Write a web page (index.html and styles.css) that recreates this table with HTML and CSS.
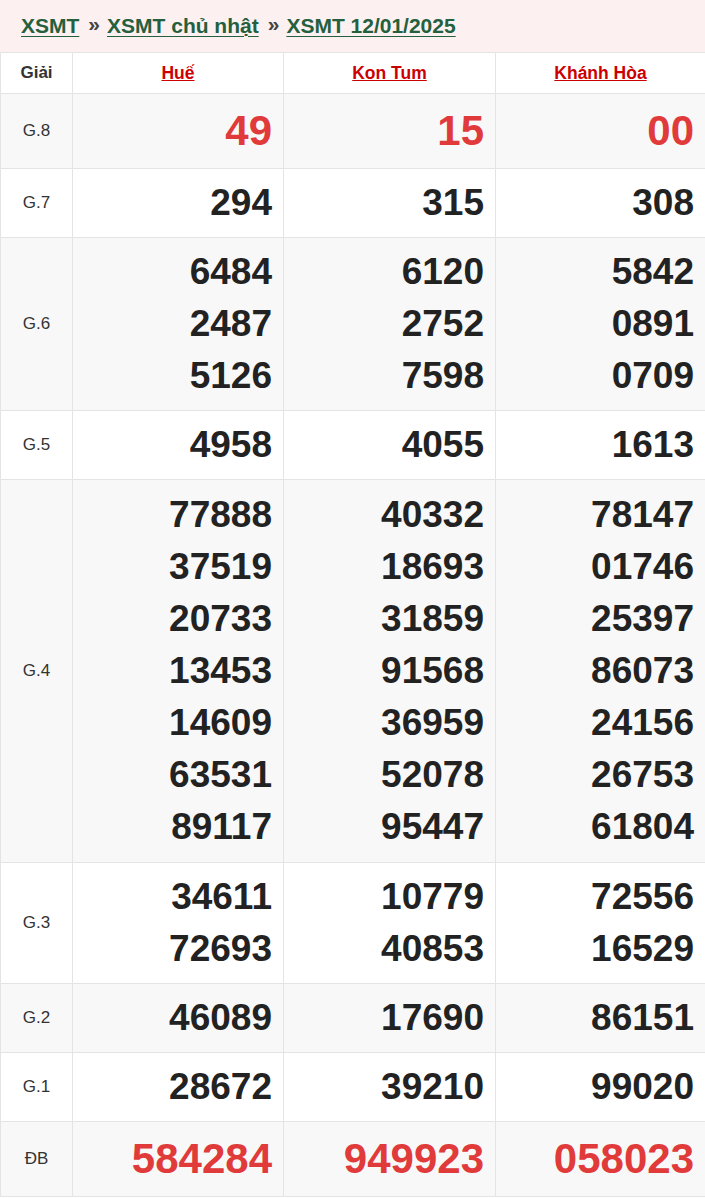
FILE: index.html
```html
<!DOCTYPE html>
<html lang="vi">
<head>
<meta charset="utf-8">
<link rel="stylesheet" href="styles.css">
</head>
<body>
<div class="crumbs">
  <a href="#">XSMT</a><span class="sep">»</span><a href="#">XSMT chủ nhật</a><span class="sep">»</span><a href="#">XSMT 12/01/2025</a>
</div>
<table class="kq">
  <colgroup><col class="c-label"><col class="c-a"><col class="c-b"><col class="c-c"></colgroup>
  <thead>
    <tr><th class="lbl">Giải</th><th><a href="#">Huế</a></th><th><a href="#">Kon Tum</a></th><th><a href="#">Khánh Hòa</a></th></tr>
  </thead>
  <tbody>
    <tr class="alt big"><td class="lbl">G.8</td><td class="red"><div>49</div></td><td class="red"><div>15</div></td><td class="red"><div>00</div></td></tr>
    <tr><td class="lbl">G.7</td><td><div>294</div></td><td><div>315</div></td><td><div>308</div></td></tr>
    <tr class="alt"><td class="lbl">G.6</td><td><div>6484</div><div>2487</div><div>5126</div></td><td><div>6120</div><div>2752</div><div>7598</div></td><td><div>5842</div><div>0891</div><div>0709</div></td></tr>
    <tr><td class="lbl">G.5</td><td><div>4958</div></td><td><div>4055</div></td><td><div>1613</div></td></tr>
    <tr class="alt g4"><td class="lbl">G.4</td>
      <td><div>77888</div><div>37519</div><div>20733</div><div>13453</div><div>14609</div><div>63531</div><div>89117</div></td>
      <td><div>40332</div><div>18693</div><div>31859</div><div>91568</div><div>36959</div><div>52078</div><div>95447</div></td>
      <td><div>78147</div><div>01746</div><div>25397</div><div>86073</div><div>24156</div><div>26753</div><div>61804</div></td></tr>
    <tr><td class="lbl">G.3</td><td><div>34611</div><div>72693</div></td><td><div>10779</div><div>40853</div></td><td><div>72556</div><div>16529</div></td></tr>
    <tr class="alt"><td class="lbl">G.2</td><td><div>46089</div></td><td><div>17690</div></td><td><div>86151</div></td></tr>
    <tr><td class="lbl">G.1</td><td><div>28672</div></td><td><div>39210</div></td><td><div>99020</div></td></tr>
    <tr class="alt big"><td class="lbl">ĐB</td><td class="red"><div>584284</div></td><td class="red"><div>949923</div></td><td class="red"><div>058023</div></td></tr>
  </tbody>
</table>
</body>
</html>
```
FILE: styles.css
```css
html, body {
  margin: 0;
  padding: 0;
  background: #fff;
  font-family: "Liberation Sans", Arial, sans-serif;
  color: #222;
}
.crumbs {
  background: #fdf0f0;
  height: 52px;
  box-sizing: border-box;
  padding: 0 21px;
  display: flex;
  align-items: center;
  font-size: 21px;
  font-weight: bold;
}
.crumbs a {
  color: #24603d;
  text-decoration: underline;
  text-underline-offset: 3px;
  text-decoration-thickness: 1px;
}
.crumbs .sep {
  color: #444;
  padding: 0 7px 0 9px;
  position: relative;
  top: -2px;
}
.kq {
  width: 705px;
  border-collapse: collapse;
  table-layout: fixed;
}
.c-label { width: 72px; }
.c-a { width: 211px; }
.c-b { width: 212px; }
.c-c { width: 210px; }
.kq th, .kq td {
  border: 1px solid #e4e4e4;
}
.kq th {
  height: 40px;
  padding: 0;
  font-size: 17.5px;
  font-weight: bold;
  text-align: center;
}
.kq th a {
  color: #cc0000;
  text-decoration: underline;
}
.kq th.lbl { color: #333; font-size: 17px; }
.kq td {
  padding: 8px 11px 8px 0;
  text-align: right;
  vertical-align: middle;
  font-size: 37px;
  font-weight: bold;
  line-height: 52px;
  color: #222;
}
.kq tr.g4 td { padding-top: 9px; padding-bottom: 9px; }
.kq td.lbl {
  padding: 0;
  text-align: center;
  font-size: 17px;
  font-weight: normal;
  line-height: 20px;
  color: #333;
}
.kq tr.g4 td.lbl { padding: 0; }
.kq tr.alt td { background: #f8f8f8; }
.kq tr.big td { font-size: 42px; line-height: 58px; }
.kq tr.big td.lbl { font-size: 17px; line-height: 20px; }
.kq td.red { color: #e03a3a; }
```
